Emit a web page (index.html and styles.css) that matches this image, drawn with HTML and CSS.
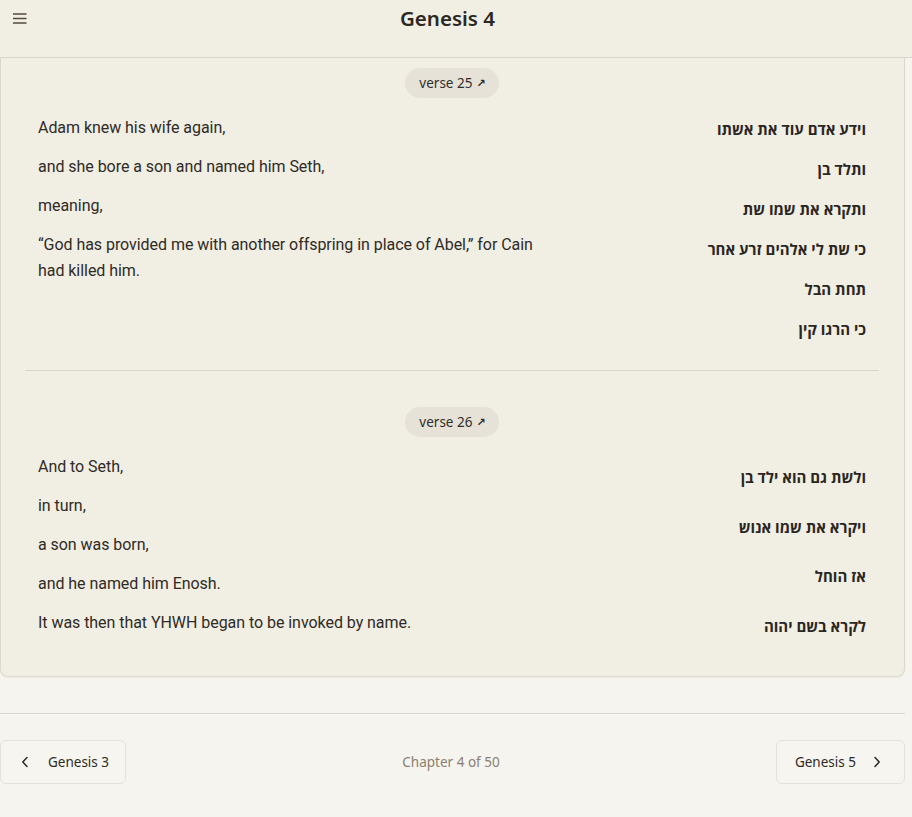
FILE: index.html
```html
<!DOCTYPE html>
<html lang="en">
<head>
<meta charset="utf-8">
<title>Genesis 4</title>
<link rel="stylesheet" href="styles.css">
</head>
<body>
<header class="topbar">
  <button class="menu-btn" aria-label="Menu">
    <svg width="14" height="11" viewBox="0 0 14 11"><path d="M0 1h13.5M0 5.5h13.5M0 10h13.5" stroke="#55493c" stroke-width="1.6" fill="none"/></svg>
  </button>
  <h1 class="title">Genesis 4</h1>
  <span class="spacer"></span>
</header>

<main class="content">
  <section class="card">
    <article class="verse verse-first">
      <div class="verse-head"><a class="pill" href="#">verse 25 <span class="arrow">↗</span></a></div>
      <div class="verse-body">
        <div class="en">
          <p>Adam knew his wife again,</p>
          <p>and she bore a son and named him Seth,</p>
          <p>meaning,</p>
          <p>“God has provided me with another offspring in place of Abel,” for Cain had killed him.</p>
        </div>
        <div class="he" dir="rtl" lang="he">
          <p>וידע אדם עוד את אשתו</p>
          <p>ותלד בן</p>
          <p>ותקרא את שמו שת</p>
          <p>כי שת לי אלהים זרע אחר</p>
          <p>תחת הבל</p>
          <p>כי הרגו קין</p>
        </div>
      </div>
    </article>
    <article class="verse">
      <div class="verse-head"><a class="pill" href="#">verse 26 <span class="arrow">↗</span></a></div>
      <div class="verse-body">
        <div class="en">
          <p>And to Seth,</p>
          <p>in turn,</p>
          <p>a son was born,</p>
          <p>and he named him Enosh.</p>
          <p>It was then that YHWH began to be invoked by name.</p>
        </div>
        <div class="he" dir="rtl" lang="he">
          <p>ולשת גם הוא ילד בן</p>
          <p>ויקרא את שמו אנוש</p>
          <p>אז הוחל</p>
          <p>לקרא בשם יהוה</p>
        </div>
      </div>
    </article>
  </section>

  <nav class="chapter-nav">
    <a class="nav-btn prev" href="#">
      <svg width="8" height="12" viewBox="0 0 8 12"><path d="M6 1.5L1.8 6L6 10.5" stroke="#2d2924" stroke-width="1.5" fill="none" stroke-linecap="round" stroke-linejoin="round"/></svg>
      <span>Genesis 3</span>
    </a>
    <span class="chapter-count">Chapter 4 of 50</span>
    <a class="nav-btn next" href="#">
      <span>Genesis 5</span>
      <svg width="8" height="12" viewBox="0 0 8 12"><path d="M2 1.5L6.2 6L2 10.5" stroke="#2d2924" stroke-width="1.5" fill="none" stroke-linecap="round" stroke-linejoin="round"/></svg>
    </a>
  </nav>
</main>
</body>
</html>
```

FILE: styles.css
```css
* { box-sizing: border-box; }

html, body {
  margin: 0;
  padding: 0;
}

body {
  background: #f6f4ee;
  color: #2d2924;
  font-family: "Noto Sans", "Open Sans", sans-serif;
  width: 912px;
  height: 817px;
  overflow: hidden;
}

.topbar {
  position: sticky;
  top: 0;
  z-index: 5;
  height: 58px;
  background: #f1eee3;
  border-bottom: 1px solid #d9d5ca;
  display: flex;
  align-items: flex-start;
  padding: 5px 44px 0 13px;
}

.menu-btn {
  border: 0;
  background: none;
  padding: 0;
  margin-top: 8px;
  width: 14px;
  height: 11px;
  display: flex;
  cursor: pointer;
}

.title {
  flex: 1;
  margin: 0;
  text-align: center;
  font-size: 20.5px;
  line-height: 26px;
  font-weight: 600;
  color: #2b2723;
}

.spacer { width: 0; }

.content {
  width: 905px;
}

.card {
  background: #f1eee3;
  border: 1px solid #dcd8cc;
  border-top: 0;
  border-radius: 0 0 8px 8px;
  padding: 0 25px 0 24px;
  box-shadow: 0 1px 2px rgba(0,0,0,0.04);
}

.verse {
  padding: 36px 13px 27px;
  border-bottom: 1px solid #d9d5ca;
}

.verse:last-child { border-bottom: 0; }

.verse-first { padding-top: 10px; }

.verse-head {
  display: flex;
  justify-content: center;
  margin-bottom: 17px;
}

.pill {
  display: inline-flex;
  align-items: center;
  height: 30px;
  padding: 0 13px 0 14px;
  border-radius: 15px;
  background: #e6e2d8;
  color: #332e28;
  font-size: 13.5px;
  text-decoration: none;
  gap: 4px;
}

.arrow {
  font-size: 11px;
  font-weight: 700;
  font-family: "DejaVu Sans", sans-serif;
}

.verse-body {
  display: grid;
  grid-template-columns: 2fr 1fr;
  column-gap: 48px;
}

.en {
  font-family: Roboto, "Liberation Sans", sans-serif;
  font-size: 16px;
  color: #2f2b26;
  letter-spacing: -0.05px;
}

.en p {
  margin: 0 0 13px;
  line-height: 26px;
}

.he {
  display: flex;
  flex-direction: column;
  justify-content: space-evenly;
  gap: 12px;
  font-family: "Open Sans", "Noto Sans Hebrew", "DejaVu Sans", sans-serif;
  font-weight: 700;
  font-size: 15px;
  color: #2a2622;
  text-align: right;
}

.he p {
  margin: 0;
  line-height: 28px;
}

.chapter-nav {
  margin-top: 36px;
  border-top: 1px solid #dcd8cf;
  padding-top: 26px;
  display: flex;
  align-items: center;
  justify-content: space-between;
}

.nav-btn {
  display: inline-flex;
  align-items: center;
  gap: 19px;
  height: 44px;
  border: 1px solid #e4e1d9;
  border-radius: 6px;
  background: #f7f5f0;
  color: #2d2924;
  font-size: 13.5px;
  text-decoration: none;
}

.prev { padding: 0 16px 0 20px; }
.next { padding: 0 23px 0 18px; gap: 17px; }

.chapter-count {
  font-size: 13.5px;
  color: #8b7f72;
}
```
